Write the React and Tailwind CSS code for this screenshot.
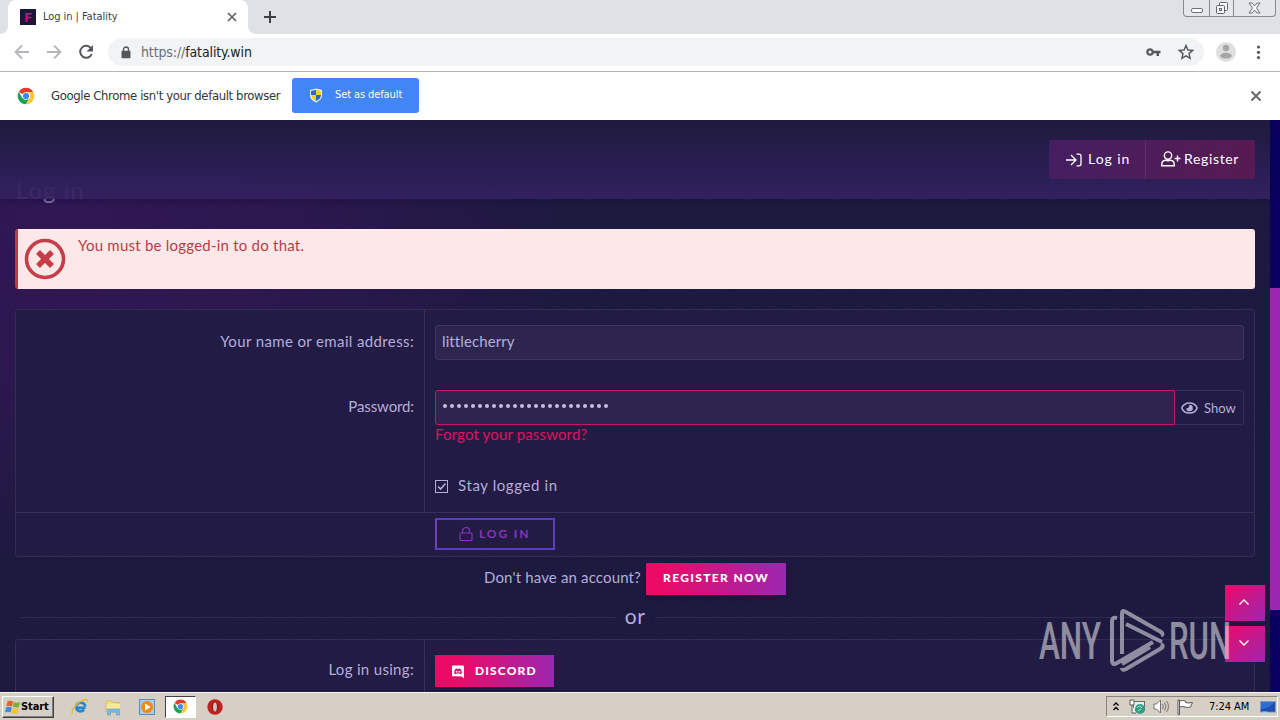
import clsx from 'clsx';

const dots = Array.from({ length: 24 });

function ChromeLogo({ className }) {
    return (
        <svg viewBox="0 0 48 48" className={className}>
            <circle cx="24" cy="24" r="22" fill="#fff" />
            <path d="M24 24 L4.9 13 A22 22 0 0 1 43.1 13 L24 13 Z" fill="#e33b2e" />
            <path d="M4.9 13 A22 22 0 0 0 24 46 L33.5 29.5 L24 24 L14.5 29.5 Z" fill="#1fa055" />
            <path d="M43.1 13 A22 22 0 0 1 24 46 L33.5 29.5 L33 18 L24 13 Z" fill="#fcc934" />
            <circle cx="24" cy="24" r="10" fill="#fff" />
            <circle cx="24" cy="24" r="8.2" fill="#4285f4" />
        </svg>
    );
}

function TabStrip() {
    return (
        <div className="flex h-[34px] bg-[#dee1e6]">
            <div className="flex flex-1">
                <div className="w-2 bg-white">
                    <div className="h-full rounded-br-lg bg-[#dee1e6]" />
                </div>
                <div className="flex w-60 items-center rounded-t-lg bg-white pr-[10px] pl-3">
                    <div className="flex h-4 w-4 items-center justify-center bg-[#1b1538] font-['Roboto',sans-serif] text-[13px] leading-none font-bold text-[#d4107e]">F</div>
                    <span className="mt-px ml-[7px] flex-1 text-[11px] tracking-[-0.05px] text-[#3c4043]">Log in | Fatality</span>
                    <svg width="12" height="12" viewBox="0 0 12 12" stroke="#5f6368" strokeWidth="1.7">
                        <path d="M2 2 10 10M10 2 2 10" />
                    </svg>
                </div>
                <div className="w-2 bg-white">
                    <div className="h-full rounded-bl-lg bg-[#dee1e6]" />
                </div>
                <svg width="12" height="12" viewBox="0 0 12 12" stroke="#3c4043" strokeWidth="2" className="mt-[11px] ml-2">
                    <path d="M6 0V12M0 6H12" />
                </svg>
            </div>
            <div className="mr-1 flex h-[17px] rounded-b border border-t-0 border-[#868a93] bg-[#e3e6eb]">
                <div className="flex w-[25px] items-end justify-center pb-[3px]">
                    <div className="h-[5px] w-3 rounded-xs border border-[#6b6f78] bg-white" />
                </div>
                <div className="flex w-[25px] items-center justify-center border-x border-[#868a93]">
                    <svg width="14" height="14" viewBox="0 0 14 14" fill="#f4f5f7" stroke="#5f6470">
                        <rect x="4.5" y="1.5" width="8" height="8" rx="1" />
                        <rect x="1.5" y="4.5" width="8" height="8" rx="1" />
                        <rect x="4.5" y="7.5" width="2" height="2" />
                    </svg>
                </div>
                <div className="flex w-[41px] items-center justify-center">
                    <svg width="13" height="12" viewBox="0 0 13 12" fill="#fafafa" stroke="#6b6f78">
                        <path d="M1 1h3l2.500 3L9 1h3L8.500 6l3.500 5H9L6.500 8 4 11H1l3.500-5z" />
                    </svg>
                </div>
            </div>
        </div>
    );
}

function Toolbar() {
    return (
        <div className="flex h-[38px] items-center border-b border-[#b4b6b8] bg-white pb-px">
            <svg width="108" height="36" viewBox="0 0 108 36" fill="none" strokeWidth="1.8">
                <path d="M29 18H16M22 11.500 15.500 18 22 24.500" stroke="#b4b6b9" />
                <path d="M47 18H60M54 11.500 60.500 18 54 24.500" stroke="#b4b6b9" />
                <path d="M91.200 14.500A6 6 0 1 0 91.800 20" stroke="#53575b" strokeWidth="2" />
                <path d="M93 11v6.500h-6.500z" fill="#53575b" />
            </svg>
            <div className="flex h-7 w-[1096px] items-center rounded-full bg-[#f1f3f4] pr-[10px] pl-[13px]">
                <svg width="10" height="13" viewBox="0 0 10 13">
                    <path d="M2.500 6V3.500a2.500 2.500 0 0 1 5 0V6" fill="none" stroke="#54585c" strokeWidth="1.400" />
                    <rect x="0.500" y="4.800" width="9" height="7.500" rx="1" fill="#54585c" />
                </svg>
                <span className="ml-[10px] flex-1 text-[14px] tracking-[-0.12px] text-[#202124]">
                    <span className="text-[#6b6f74]">https://</span>fatality.win
                </span>
                <svg width="15" height="10" viewBox="0 0 15 10">
                    <circle cx="4" cy="5" r="2.700" fill="none" stroke="#54585c" strokeWidth="2.200" />
                    <path d="M7 3.800h7.500v2.400H13V9h-2.500V6.200H7z" fill="#54585c" />
                </svg>
                <svg width="16" height="16" viewBox="0 0 16 16" className="ml-[17px]">
                    <path d="M8 1.500 9.900 6l4.800.4L11 9.600l1.100 4.700L8 11.800l-4.100 2.500L5 9.600 1.300 6.400 6.100 6z" fill="none" stroke="#54585c" strokeWidth="1.400" />
                </svg>
            </div>
            <svg width="76" height="36" viewBox="0 0 76 36">
                <circle cx="22" cy="18" r="10" fill="#dfdfdf" />
                <circle cx="22" cy="14" r="3.200" fill="#a6a6a6" />
                <ellipse cx="22" cy="21.700" rx="5.800" ry="2.900" fill="#a6a6a6" />
                <g fill="#54585c">
                    <circle cx="54.500" cy="13" r="1.600" />
                    <circle cx="54.500" cy="18.300" r="1.600" />
                    <circle cx="54.500" cy="23.600" r="1.600" />
                </g>
            </svg>
        </div>
    );
}

function DefaultBrowserBar() {
    return (
        <div className="flex h-12 items-center bg-white pr-[18px] pb-px pl-[17px]">
            <ChromeLogo className="h-[18px] w-[18px]" />
            <span className="ml-4 w-[229px] text-[13px] tracking-[-0.38px] whitespace-nowrap text-[#33363a]">Google Chrome isn't your default browser</span>
            <div className="ml-3 flex h-[35px] w-[127px] items-center rounded-[3px] bg-[#4285f4] pl-[17px] text-white">
                <svg width="14" height="15" viewBox="0 0 14 15">
                    <path d="M7 .5 1 2v5c0 4 3 6 6 7.500 3-1.500 6-3.500 6-7.500V2z" fill="#e9eef6" />
                    <path d="M7 1.700 2 3v4h5z" fill="#2f67c5" />
                    <path d="M7 1.700 12 3v4H7z" fill="#fcd116" />
                    <path d="M2 7h5v6.200C4 11.800 2.200 10 2 7z" fill="#fcd116" />
                    <path d="M12 7H7v6.200c3-1.400 4.800-3.200 5-6.200z" fill="#2f67c5" />
                </svg>
                <span className="ml-3 text-[11px] tracking-[-0.1px] whitespace-nowrap">Set as default</span>
            </div>
            <div className="flex-1" />
            <svg width="12" height="12" viewBox="0 0 12 12" stroke="#65696d" strokeWidth="2" className="mt-px">
                <path d="M1.500 1.500 10.500 10.500M10.500 1.500 1.500 10.500" />
            </svg>
        </div>
    );
}

function SiteHeader() {
    return (
        <div className="relative z-10 flex h-[79px] shrink-0 justify-end bg-linear-to-b from-[#1f1a3d] via-[#271d50] to-[#342162]/90 pt-5 pr-[15px] shadow-[0_2px_6px_rgba(10,8,40,0.35)]">
            <div className="flex h-[39px] rounded-xs bg-linear-to-r from-[#451e61] to-[#571a52] text-[14px] leading-[18px] text-white">
                <div className="flex w-[97px] items-center border-r border-[#5c3370] pl-[17px]">
                    <svg width="16" height="14" viewBox="0 0 16 14" fill="none" stroke="currentColor" strokeWidth="1.300">
                        <path d="M0 7H10M5 2l5 5-5 5M10.500 1.200H13a2 2 0 0 1 2 2v7.600a2 2 0 0 1-2 2h-2.500" />
                    </svg>
                    <span className="mb-px ml-1.5 tracking-[0.95px] whitespace-nowrap">Log in</span>
                </div>
                <div className="flex w-[109px] items-center pl-[15px]">
                    <svg width="20" height="16" viewBox="0 0 20 16" fill="none" stroke="currentColor" strokeWidth="1.400" className="mb-0.5">
                        <circle cx="7" cy="4.600" r="3.700" />
                        <path d="M4.500 9.200C2 9.500.8 11 .8 13v1.800h12.400V13c0-2-1.200-3.500-3.700-3.800-1.500.7-3.500.7-5 0zM16.500 4.500v6M13.500 7.500h6" />
                    </svg>
                    <span className="mb-px ml-[3px] tracking-[0.65px] whitespace-nowrap">Register</span>
                </div>
            </div>
        </div>
    );
}

function ErrorNotice() {
    return (
        <div className="flex h-[60px] rounded-[3px] border-l-[3px] border-[#c8363d] bg-[#fde8e9] pl-[6px] text-[#b93d45]">
            <svg width="42" height="42" viewBox="0 0 42 42" fill="none" stroke="#c53d46" className="mt-[9px]">
                <circle cx="21" cy="21" r="18.500" strokeWidth="3.600" />
                <path d="M14 14 28 28M28 14 14 28" strokeWidth="5.500" />
            </svg>
            <span className="mt-[5px] ml-[12px] text-[15px] leading-[22px] tracking-[0.23px]">You must be logged-in to do that.</span>
        </div>
    );
}

function FormRow({ label, className, children }) {
    return (
        <div className={clsx('flex', className)}>
            <div className="w-[409px] shrink-0 border-r border-[#372f56] pr-[10px] text-right">{label}</div>
            <div className="flex-1 px-[10px]">{children}</div>
        </div>
    );
}

function LoginForm() {
    return (
        <div className="mt-5 h-[248px] rounded-[3px] border border-[#332c53] bg-[#221b43] text-[15px] leading-[22px]">
            <FormRow className="h-[66px]" label={<div className="pt-5 tracking-[0.37px]">Your name or email address:</div>}>
                <div className="mt-[15px] flex h-[35px] items-center rounded-[3px] border border-[#40375f] bg-[#2d254d] px-1.5 pb-[3px] tracking-[0.1px]">littlecherry</div>
            </FormRow>
            <FormRow className="h-[136px]" label={<div className="pt-[19px] tracking-[-0.12px]">Password:</div>}>
                <div className="mt-[14px] flex h-[35px]">
                    <div className="flex flex-1 items-center gap-[3px] rounded-l-[3px] border border-[#c01769] bg-[#2d254d] pb-[3px] pl-[7px]">
                        {dots.map((_, i) => (
                            <div key={i} className="h-1 w-1 rounded-full bg-[#c8bfe2]" />
                        ))}
                    </div>
                    <div className="flex w-[69px] items-center rounded-r-[3px] border border-l-0 border-[#372f56] pl-1.5 text-[13px]">
                        <svg width="17" height="12" viewBox="0 0 17 12" fill="none" stroke="currentColor" strokeWidth="1.600">
                            <path d="M.8 6C3.500-.700 13.500-.700 16.200 6 13.500 12.700 3.500 12.700.8 6z" />
                            <path d="M8.500 2.700a3.300 3.300 0 1 1-3.300 3.500c1.600.6 3-.9 3.300-3.500z" fill="currentColor" stroke="none" />
                        </svg>
                        <span className="ml-1.5">Show</span>
                    </div>
                </div>
                <div className="-mt-[2px] tracking-[0.15px] text-[#e0115f]">Forgot your password?</div>
                <div className="mt-[29px] flex items-center">
                    <svg width="13" height="13" viewBox="0 0 13 13" fill="none" stroke="currentColor" className="mt-0.5">
                        <rect x="0.500" y="0.500" width="12" height="12" />
                        <path d="M3 6.500 5.500 9 10.500 3.500" strokeWidth="1.600" />
                    </svg>
                    <span className="ml-[10px] tracking-[0.6px]">Stay logged in</span>
                </div>
            </FormRow>
            <div className="h-[45px] border-t border-[#372f56] pt-[5px] pl-[419px]">
                <div className="flex h-8 w-[120px] items-center border-2 border-[#5b3cc4] border-l-[#7240b5] pb-px pl-[22px] text-[#8535bd]">
                    <svg width="14" height="14" viewBox="0 0 14 14" fill="none" stroke="currentColor" strokeWidth="1.200">
                        <rect x="1" y="6" width="12" height="7.500" rx="1" />
                        <path d="M3.500 6V4a3.500 3.500 0 0 1 7 0v2" />
                    </svg>
                    <span className="ml-1.5 text-[12px] font-bold tracking-[1.9px]">LOG IN</span>
                </div>
            </div>
        </div>
    );
}

function ProviderForm() {
    return (
        <div className="mt-[10px] h-24 rounded-t-[3px] border border-[#332c53] bg-[#221b43] text-[15px] leading-[22px]">
            <FormRow className="h-full" label={<div className="pt-[18px] tracking-[0.32px]">Log in using:</div>}>
                <div className="mt-[15px] flex h-8 w-[119px] items-center bg-linear-to-r/srgb from-[#ec0a67] from-20% to-[#9b27b0] pb-px pl-[17px] text-white shadow-md">
                    <svg width="12" height="14" viewBox="0 0 13 14" className="mt-0.5">
                        <path d="M1.300 0h10.400Q13 0 13 1.300V14l-2.500-2-7-.3H1.300Q0 11.700 0 10.400V1.300Q0 0 1.300 0z" fill="#fff" />
                        <path d="M2.300 8.300C2.400 6 3 4.500 3.600 3.900 4.500 3.300 5 3.300 5.400 3.300L5.700 3.800h1.600l.3-.5c.6 0 1.200.1 1.900.6.600.7 1.200 2.300 1.200 4.400C10 9 9.300 9.300 8.600 9.300L8 8.600H5l-.6.7C3.500 9.300 2.800 9 2.300 8.300z" fill="#d40f74" />
                        <circle cx="5" cy="6.600" r="1" fill="#fff" />
                        <circle cx="8" cy="6.600" r="1" fill="#fff" />
                    </svg>
                    <span className="ml-[11px] text-[12px] font-black tracking-[1.15px]">DISCORD</span>
                </div>
            </FormRow>
        </div>
    );
}

function ScrollButton({ d, className }) {
    return (
        <div className={clsx('flex h-9 w-10 items-center justify-center bg-linear-to-br/srgb from-[#ed0a69] to-[#9b27b0] pr-0.5 pb-[3px]', className)}>
            <svg width="12" height="8" viewBox="0 0 12 8" fill="none" stroke="#fff" strokeWidth="1.400">
                <path d={d} />
            </svg>
        </div>
    );
}

function Watermark() {
    return (
        <svg width="200" height="64" viewBox="0 0 200 64" className="absolute top-[488px] left-[1038px] z-20 opacity-50">
            <g fill="#fff" fontFamily="Roboto, sans-serif" fontSize="51" fontWeight="500">
                <text x="1" y="51" textLength="62" lengthAdjust="spacingAndGlyphs">ANY</text>
                <text x="131" y="51" textLength="62" lengthAdjust="spacingAndGlyphs">RUN</text>
            </g>
            <g fill="none" stroke="#fff" strokeWidth="4" strokeLinejoin="round">
                <path d="M84 46V5q0-3 3-1.500L123 24q3 2 0 3.500M88 16l36 18M115 34 79 55q-5 3-5-3V13q0-4 5-3" />
                <path d="M84 60q0 3 4 1L122 41q5-3 1-5M84 56l28-17" />
            </g>
        </svg>
    );
}

function LoginPage() {
    return (
        <div className="relative flex h-[572px] overflow-hidden bg-[#1c193f] font-['Lato',sans-serif] text-[#b6addb]">
            <div className="flex w-[1270px] flex-col bg-[radial-gradient(ellipse_500px_330px_at_60px_110px,rgba(75,20,110,0.42),rgba(75,20,110,0.32)_45%,transparent)]">
                <SiteHeader />
                <div className="bg-[repeating-linear-gradient(125deg,transparent_0_3px,rgba(90,30,120,0.1)_3px_4px)] px-[15px] pt-[30px]">
                    <ErrorNotice />
                    <LoginForm />
                    <div className="mt-1.5 flex h-8 items-center justify-center text-[15px]">
                        <span className="mb-[3px] tracking-[0.15px]">Don't have an account?</span>
                        <span className="ml-[5px] flex h-8 w-[140px] items-center justify-center bg-linear-to-r/srgb from-[#ec0a67] from-10% to-[#9b27b0] pb-0.5 text-[12px] font-black tracking-[1.35px] text-white shadow-md">REGISTER NOW</span>
                    </div>
                    <div className="mt-[10px] flex h-6 items-center gap-[10px] px-[6px] text-[21px] leading-6">
                        <div className="mt-[1px] h-px flex-1 bg-[#302951]" />
                        <span className="-mt-0.5 tracking-[0.5px]">or</span>
                        <div className="mt-[1px] h-px flex-1 bg-[#302951]" />
                    </div>
                    <ProviderForm />
                </div>
            </div>
            <div className="w-[10px] bg-[#0a0060]">
                <div className="mt-[168px] h-[322px] bg-[#9b27b0]" />
            </div>
            {/* page title scrolled under the translucent header */}
            <div className="absolute top-[55px] left-4 text-[24px] leading-[30px] tracking-[1px] text-[#8e80b6]">Log in</div>
            <div className="absolute top-[465px] left-[1225px] flex flex-col gap-[5px]">
                <ScrollButton d="M1.500 6.500 6 2l4.500 4.500" />
                <ScrollButton d="M1.500 1.500 6 6l4.500-4.500" />
            </div>
            <Watermark />
        </div>
    );
}

function Taskbar() {
    return (
        <div className="flex h-7 items-center border-t border-[#f6f4ef] bg-[#d5cfc6] pl-0.5">
            <div className="flex h-[22px] w-[52px] items-center border border-t-white border-r-[#404040] border-b-[#404040] border-l-white shadow-[inset_-1px_-1px_0_#808080]">
                <svg width="16" height="16" viewBox="0 0 16 16" className="ml-0.5">
                    <path d="M2.500 2.500Q5 1 8 2.500L7 7.500Q4 6 1.300 7.500z" fill="#e8602c" />
                    <path d="M8.800 3Q12 4.500 15 3L13.800 8Q11 9.300 7.900 7.800z" fill="#73b53a" />
                    <path d="M1 8.500Q4 7 6.800 8.500L5.600 13.500Q3 12 0 13.500z" fill="#3c8cdc" />
                    <path d="M7.700 9Q10.500 10.300 13.600 9L12.300 14Q9.500 15.300 6.500 13.900z" fill="#f8c22d" />
                </svg>
                <span className="mt-0.5 text-[11px] font-bold tracking-[-0.1px] text-black">Start</span>
            </div>
            <svg width="18" height="18" viewBox="0 0 18 18" className="ml-[17px]" fill="none">
                <path d="M14.500 9.800H5.500c.2 4 5.200 4.500 7.500 1.800M5.300 8.500c.5-5 8.500-5 9 0" stroke="#2687cf" strokeWidth="2.700" />
                <path d="M1.500 16C-1 12 8 3 14 1.500q3.500-.500 2 3" stroke="#e4b83c" strokeWidth="1.300" />
            </svg>
            <svg width="18" height="18" viewBox="0 0 18 18" className="ml-[15px]">
                <path d="M2 3h5l1.500 1.500H15V14H2z" fill="#f5dc7c" stroke="#d6b254" strokeWidth=".7" />
                <path d="M3 6h13v8H3z" fill="#f8e89c" />
                <path d="M3.500 17v-6h12v6h-3v-3h-6v3z" fill="#7dbce4" stroke="#5d98c4" strokeWidth=".6" />
            </svg>
            <svg width="16" height="16" viewBox="0 0 16 16" className="ml-[17px]">
                <rect x=".5" y=".5" width="15" height="15" fill="#a6cdec" stroke="#548fc0" />
                <circle cx="8" cy="8" r="6" fill="#f28a18" />
                <path d="M6 4.500 11.500 8 6 11.500z" fill="#fff" />
            </svg>
            <div className="ml-[10px] flex h-[22px] w-[31px] items-center justify-center border border-t-[#404040] border-r-white border-b-white border-l-[#404040] bg-white">
                <ChromeLogo className="h-[15px] w-[15px]" />
            </div>
            <svg width="16" height="16" viewBox="0 0 16 16" className="mt-px ml-[11px]">
                <circle cx="8" cy="8" r="7.700" fill="#c1221f" />
                <ellipse cx="8" cy="8" rx="2.500" ry="5.300" fill="#d2c3bd" stroke="#7b1210" />
            </svg>
            <div className="flex-1" />
            <div className="mr-[2px] flex h-[21px] w-[172px] items-center border border-t-[#8a857b] border-r-white border-b-white border-l-[#8a857b]">
                <svg width="6" height="9" viewBox="0 0 6 9" fill="none" stroke="#000" strokeWidth="1.300" className="mb-px ml-[6px]">
                    <path d="M.5 3.500 3 1l2.500 2.500M.5 8 3 5.500 5.500 8" />
                </svg>
                <svg width="17" height="16" viewBox="0 0 17 16" className="ml-[10px]">
                    <rect x="4.500" y="2.500" width="11" height="9" fill="#e8efe9" stroke="#60706b" />
                    <path d="M1 1h4v5H1zM3 6v8h4" fill="#fff" stroke="#56605b" />
                    <circle cx="11" cy="10" r="5" fill="#2f9d82" />
                    <path d="M8 9q3-4 5 0M9 12l3-2" stroke="#b9e6d8" fill="none" />
                </svg>
                <svg width="17" height="15" viewBox="0 0 17 15" fill="none" stroke="#77746e" className="ml-[7px]">
                    <path d="M1 5h2.500L7.500 1v13l-4-4H1z" fill="#fff" />
                    <path d="M9.500 5q1.500 2.500 0 5M11.500 3.500q3 4 0 8M13.500 2q4 5.500 0 11" />
                </svg>
                <svg width="17" height="16" viewBox="0 0 17 16" fill="#fff" stroke="#5b5954" className="ml-[7px]">
                    <path d="M2.500 2v13.500H1V1h1.500v1q3-1 6 0v1.500q3 1 7 0l-2 4.500q-3 1-5.500 0V8q-3-1-5.500 0" />
                </svg>
                <span className="mt-0.5 ml-[15px] w-[42px] text-[11px] tracking-[-0.05px] whitespace-nowrap text-black">7:24 AM</span>
                <svg width="16" height="14" viewBox="0 0 16 14" className="mt-0.5 ml-[9px]">
                    <rect x=".5" y=".5" width="15" height="10.500" fill="#2e6ed3" stroke="#7e9cc4" />
                    <path d="M1 8Q8 8 15 1v9.500H1z" fill="#1f4fae" />
                    <path d="M2 10.500h5v2H2z" fill="#9bd0f0" />
                </svg>
            </div>
        </div>
    );
}

export default function App() {
    return (
        <div className="flex h-[720px] w-[1280px] flex-col overflow-hidden font-['DejaVu_Sans_Condensed','DejaVu_Sans',sans-serif]">
            <TabStrip />
            <Toolbar />
            <DefaultBrowserBar />
            <LoginPage />
            <Taskbar />
        </div>
    );
}
